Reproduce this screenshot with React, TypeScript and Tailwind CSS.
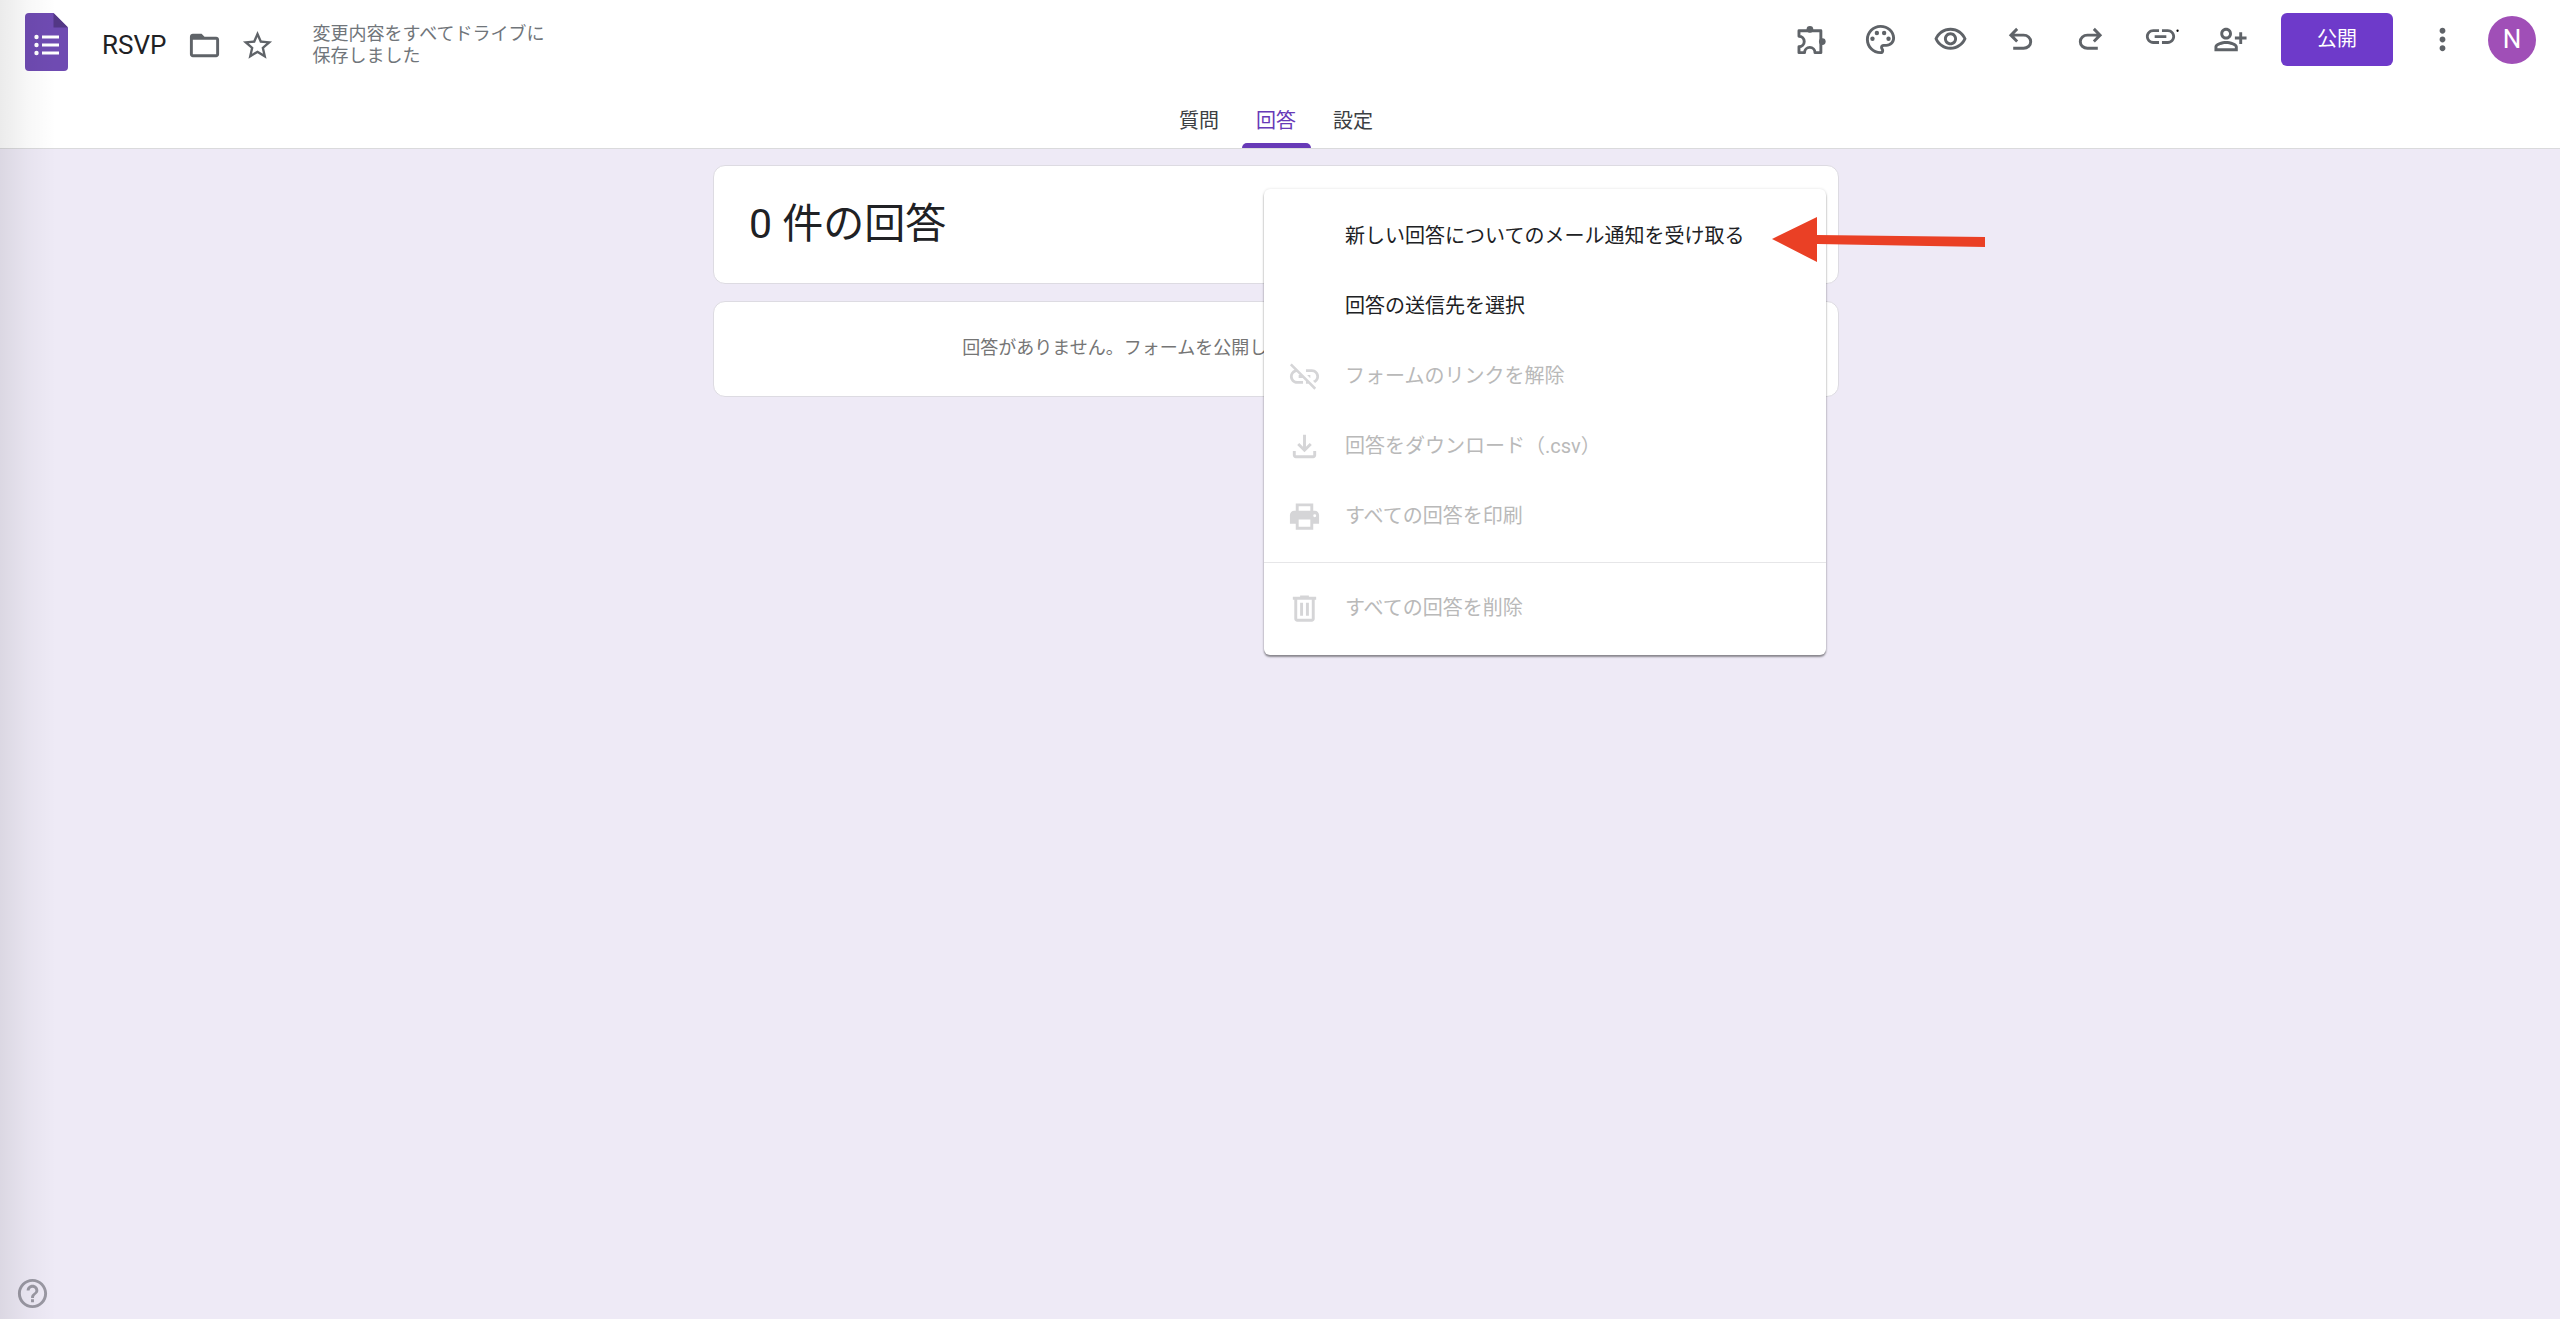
import React from 'react';

interface IconProps {
  d: string;
  className?: string;
}

const Icon: React.FC<IconProps> = ({ d, className = '' }) => (
  <svg viewBox="0 0 24 24" fill="currentColor" aria-hidden="true" className={`size-[35px] shrink-0 ${className}`}>
    <path d={d} />
  </svg>
);

const ICONS = {
  folder: 'M20 6h-8l-2-2H4c-1.1 0-1.99.9-1.99 2L2 18c0 1.1.9 2 2 2h16c1.1 0 2-.9 2-2V8c0-1.1-.9-2-2-2zm0 12H4V8h16v10z',
  star: 'M22 9.24l-7.19-.62L12 2 9.19 8.63 2 9.24l5.46 4.73L5.82 21 12 17.27 18.18 21l-1.63-7.03L22 9.24zM12 15.4l-3.76 2.27 1-4.28-3.32-2.88 4.38-.38L12 6.1l1.71 4.04 4.38.38-3.32 2.88 1 4.28L12 15.4z',
  eye: 'M12 6c3.79 0 7.17 2.13 8.82 5.5C19.17 14.87 15.79 17 12 17s-7.17-2.13-8.82-5.5C4.83 8.13 8.21 6 12 6m0-2C7 4 2.73 7.11 1 11.5 2.73 15.89 7 19 12 19s9.27-3.11 11-7.5C21.27 7.11 17 4 12 4zm0 5c1.38 0 2.5 1.12 2.5 2.5S13.38 14 12 14s-2.5-1.12-2.5-2.5S10.62 9 12 9m0-2c-2.48 0-4.5 2.02-4.5 4.5S9.52 16 12 16s4.5-2.02 4.5-4.5S14.48 7 12 7z',
  undo: 'M7 19v-2h7.1q1.575 0 2.738-1T18 13.5 16.838 11 14.1 10H7.8l2.6 2.6L9 14 4 9l5-5 1.4 1.4L7.8 8h6.3q2.425 0 4.163 1.575T20 13.5t-1.737 3.925T14.1 19z',
  redo: 'M9.9 19q-2.425 0-4.163-1.575T4 13.5t1.737-3.925T9.9 8h6.3l-2.6-2.6L15 4l5 5-5 5-1.4-1.4 2.6-2.6H9.9q-1.575 0-2.738 1T6 13.5 7.162 16 9.9 17H17v2z',
  link: 'M3.9 10c0-1.710 1.390-3.100 3.100-3.100h4V5H7c-2.760 0-5 2.240-5 5s2.240 5 5 5h4v-1.900H7c-1.710 0-3.100-1.390-3.100-3.100zM8 11h8V9H8v2zm9-6h-4v1.900h4c1.710 0 3.100 1.390 3.100 3.100s-1.390 3.100-3.100 3.100h-4V15h4c2.760 0 5-2.240 5-5s-2.240-5-5-5z',
  addPerson: 'M9 12c2.21 0 4-1.79 4-4s-1.79-4-4-4-4 1.79-4 4 1.79 4 4 4zm0-6c1.1 0 2 .9 2 2s-.9 2-2 2-2-.9-2-2 .9-2 2-2zm0 7c-2.67 0-8 1.34-8 4v3h16v-3c0-2.66-5.33-4-8-4zm6 5H3v-.99C3.2 16.29 6.3 15 9 15s5.8 1.29 6 2v1zm5-8V7h-2v3h-3v2h3v3h2v-3h3v-2h-3z',
  more: 'M12 8c1.1 0 2-.9 2-2s-.9-2-2-2-2 .9-2 2 .9 2 2 2zm0 2c-1.1 0-2 .9-2 2s.9 2 2 2 2-.9 2-2-.9-2-2-2zm0 6c-1.1 0-2 .9-2 2s.9 2 2 2 2-.9 2-2-.9-2-2-2z',
  unlink: 'M17 7h-4v1.9h4c1.71 0 3.1 1.39 3.1 3.1 0 1.43-.98 2.63-2.31 2.98l1.46 1.46C20.88 15.61 22 13.95 22 12c0-2.76-2.24-5-5-5zm-1 4h-2.19l2 2H16zM2 4.27l3.11 3.11C3.29 8.12 2 9.91 2 12c0 2.76 2.24 5 5 5h4v-1.900H7c-1.71 0-3.1-1.39-3.1-3.1 0-1.59 1.21-2.9 2.76-3.07L8.73 11H8v2h2.73L13 15.27V17h1.73l4.01 4L20 19.74 3.27 3 2 4.27z',
  download: 'M12 16l-5-5 1.4-1.45 2.6 2.6V4h2v8.15l2.6-2.6L17 11zm-6 4q-.825 0-1.413-.587T4 18v-3h2v3h12v-3h2v3q0 .825-.587 1.413T18 20z',
  print: 'M19 8h-1V3H6v5H5c-1.66 0-3 1.34-3 3v6h4v4h12v-4h4v-6c0-1.66-1.34-3-3-3zM8 5h8v3H8V5zm8 14H8v-5h8v5zm2-7.5a1 1 0 1 1 2 0 1 1 0 0 1-2 0z',
  trash: 'M15 4V3H9v1H4v2h1v13c0 1.1.9 2 2 2h10c1.1 0 2-.9 2-2V6h1V4h-5zm2 15H7V6h10v13zM9 8h2v9H9zm4 0h2v9h-2z',
  help: 'M11 18h2v-2h-2v2zm1-16C6.48 2 2 6.48 2 12s4.48 10 10 10 10-4.48 10-10S17.52 2 12 2zm0 18c-4.41 0-8-3.59-8-8s3.59-8 8-8 8 3.59 8 8-3.59 8-8 8zm0-14c-2.21 0-4 1.79-4 4h2c0-1.1.9-2 2-2s2 .9 2 2c0 2-3 1.75-3 5h2c0-2.25 3-2.5 3-5 0-2.21-1.79-4-4-4z',
};

const FormsLogo = () => (
  <svg viewBox="0 0 43 58" aria-hidden="true" className="h-[58px] w-[43px]">
    <path d="M4 0h24.500L43 14.500V54a4 4 0 0 1-4 4H4a4 4 0 0 1-4-4V4a4 4 0 0 1 4-4z" fill="#6f4bb2" />
    <path d="M28.500 0 43 14.500H28.500z" fill="#533785" />
    <g fill="#fff">
      <circle cx="11.5" cy="24" r="2.2" />
      <circle cx="11.5" cy="32" r="2.2" />
      <circle cx="11.5" cy="40" r="2.2" />
      <path d="M17 22.500h17v3H17zM17 30.500h17v3H17zM17 38.500h17v3H17z" />
    </g>
  </svg>
);

const Puzzle = () => (
  <svg viewBox="0 0 24 24" fill="currentColor" aria-hidden="true" className="size-[35px]">
    <path
      d="M4.100 6h15v15h-4a3.600 3.600 0 0 0-7.200 0H4.100v-4a3.600 3.600 0 0 0 0-7.200z"
      fill="none"
      stroke="currentColor"
      strokeWidth="2"
      strokeLinejoin="round"
    />
    <circle cx="11.6" cy="5" r="2.3" />
    <circle cx="20.1" cy="13.4" r="2.3" />
  </svg>
);

const Palette = () => (
  <svg viewBox="0 0 24 24" fill="currentColor" aria-hidden="true" className="size-[35px]">
    <path d="M12 22C6.490 22 2 17.510 2 12S6.490 2 12 2s10 4.040 10 9c0 3.310-2.690 6-6 6h-1.770c-.28 0-.5.220-.5.500 0 .120.050.230.130.330.410.470.640 1.060.640 1.670A2.500 2.500 0 0 1 12 22zm0-18c-4.410 0-8 3.590-8 8s3.590 8 8 8c.28 0 .5-.220.5-.500a.540.540 0 0 0-.140-.350c-.410-.460-.630-1.050-.630-1.650a2.500 2.500 0 0 1 2.500-2.500H16c2.210 0 4-1.790 4-4 0-3.860-3.590-7-8-7z" />
    <circle cx="6.5" cy="11.5" r="1.5" />
    <circle cx="9.5" cy="7.5" r="1.5" />
    <circle cx="14.5" cy="7.5" r="1.5" />
    <circle cx="17.5" cy="11.5" r="1.5" />
  </svg>
);

const LinkWithDot = () => (
  <svg viewBox="0 0 24 24" fill="currentColor" aria-hidden="true" className="size-[35px] overflow-visible">
    <path d={ICONS.link} />
    <circle cx="23.7" cy="6" r="0.8" fill="#000" />
  </svg>
);

const TOOLS = [
  { label: 'アドオン', icon: <Puzzle /> },
  { label: 'テーマをカスタマイズ', icon: <Palette /> },
  { label: 'プレビュー', icon: <Icon d={ICONS.eye} /> },
  { label: '元に戻す', icon: <Icon d={ICONS.undo} /> },
  { label: 'やり直す', icon: <Icon d={ICONS.redo} /> },
  { label: '回答者へのリンクをコピー', icon: <LinkWithDot /> },
  { label: '共同編集者を追加', icon: <Icon d={ICONS.addPerson} /> },
];

const TABS = ['質問', '回答', '設定'];

interface MenuItemProps {
  label: string;
  icon?: string;
  disabled?: boolean;
}

const MENU: MenuItemProps[] = [
  { label: '新しい回答についてのメール通知を受け取る' },
  { label: '回答の送信先を選択' },
  { label: 'フォームのリンクを解除', icon: ICONS.unlink, disabled: true },
  { label: '回答をダウンロード（.csv）', icon: ICONS.download, disabled: true },
  { label: 'すべての回答を印刷', icon: ICONS.print, disabled: true },
];

const MenuItem: React.FC<MenuItemProps> = ({ label, icon, disabled }) => (
  <button
    type="button"
    role="menuitem"
    disabled={disabled}
    className="flex h-[70px] w-full items-center gap-[23px] px-[23px] text-left text-[20px] text-[#202124] disabled:text-[#b9b9b9]"
  >
    <span className="size-[35px] shrink-0 text-[#d5d5d7]">{icon && <Icon d={icon} />}</span>
    {label}
  </button>
);

const Header = () => (
  <header className="border-b border-[#dadadc] bg-white">
    <div className="flex h-[88px] items-start justify-between pl-[25px] pr-6">
      <div className="flex items-center pt-[13px]">
        <FormsLogo />
        <div className="flex items-center pt-1.5">
          <h1 className="ml-[34px] text-[26px] leading-8 text-[#202124]">RSVP</h1>
          <button type="button" aria-label="フォルダに移動" className="ml-[21px] text-[#5f6368]">
            <Icon d={ICONS.folder} />
          </button>
          <button type="button" aria-label="スターを付ける" className="ml-[18px] text-[#5f6368]">
            <Icon d={ICONS.star} />
          </button>
          <p className="ml-[37px] w-60 text-[18px] leading-[22px] text-[#70757a]">
            変更内容をすべてドライブに
            <br />
            保存しました
          </p>
        </div>
      </div>

      <div className="flex items-center pt-[13px] text-[#5f6368]">
        <div className="flex gap-[35px]">
          {TOOLS.map((tool) => (
            <button key={tool.label} type="button" aria-label={tool.label}>
              {tool.icon}
            </button>
          ))}
        </div>
        <button type="button" className="ml-[33px] h-[53px] w-28 rounded-md bg-[#6e3aca] pb-0.5 text-[20px] text-white">
          公開
        </button>
        <button type="button" aria-label="その他" className="ml-8">
          <Icon d={ICONS.more} />
        </button>
        <button type="button" aria-label="アカウント" className="ml-7 size-12 rounded-full bg-[#a04fb7] text-[26px] text-white">
          N
        </button>
      </div>
    </div>

    <nav className="flex h-[60px] justify-center gap-2 pr-2">
      {TABS.map((tab) => (
        <button
          key={tab}
          type="button"
          aria-current={tab === '回答' ? 'page' : undefined}
          className="flex w-[69px] flex-col items-center justify-between pt-[18px] text-[20px] leading-[30px] text-[#3c4043] aria-[current=page]:text-[#673ab7]"
        >
          {tab}
          {tab === '回答' && <span className="h-[5px] w-full rounded-t-md bg-[#673ab7]" />}
        </button>
      ))}
    </nav>
  </header>
);

// Red callout arrow pointing at the first menu entry
const Arrow = () => (
  <svg viewBox="0 0 213 46" aria-hidden="true" className="absolute left-[508px] top-7 h-[46px] w-[213px]">
    <path d="M0 22 45 0v18l168 2v10L45 27v18z" fill="#ea4025" />
  </svg>
);

export default function App() {
  return (
    <div className="relative flex min-h-screen flex-col bg-[#eeeaf6] font-[Roboto,'Noto_Sans_CJK_JP',sans-serif]">
      <Header />

      <main className="flex-1 pr-2 pt-4">
        <div className="relative mx-auto flex w-full max-w-[1126px] flex-col gap-[17px]">
          <section className="h-[119px] rounded-xl border border-[#dddbe2] bg-white px-[35px] pt-[30px]">
            <h2 className="text-[41px] leading-[56px] text-[#202124]">0 件の回答</h2>
          </section>
          <section className="h-[96px] rounded-xl border border-[#dddbe2] bg-white pt-8 text-center">
            <p className="text-[18px] leading-7 text-[#757575]">
              回答がありません。フォームを公開して回答の受け付けを開始してください。
            </p>
          </section>

          <div className="absolute right-[13px] top-6 w-[562px]">
            <div role="menu" className="rounded-md bg-white py-3 shadow-[0_2px_2px_rgba(0,0,0,0.4),0_0_3px_rgba(0,0,0,0.12)]">
              {MENU.map((item) => (
                <MenuItem key={item.label} {...item} />
              ))}
              <hr className="mb-2.5 mt-[11px] border-[#e6e6e8]" />
              <MenuItem label="すべての回答を削除" icon={ICONS.trash} disabled />
            </div>
            <Arrow />
          </div>
        </div>
      </main>

      <footer className="px-[15px] pb-2 text-[#9a98a3]">
        <button type="button" aria-label="ヘルプ" className="block">
          <Icon d={ICONS.help} />
        </button>
      </footer>

      <div className="pointer-events-none absolute inset-y-0 left-0 w-14 bg-linear-to-r from-black/8 via-black/3 to-transparent" />
    </div>
  );
}
